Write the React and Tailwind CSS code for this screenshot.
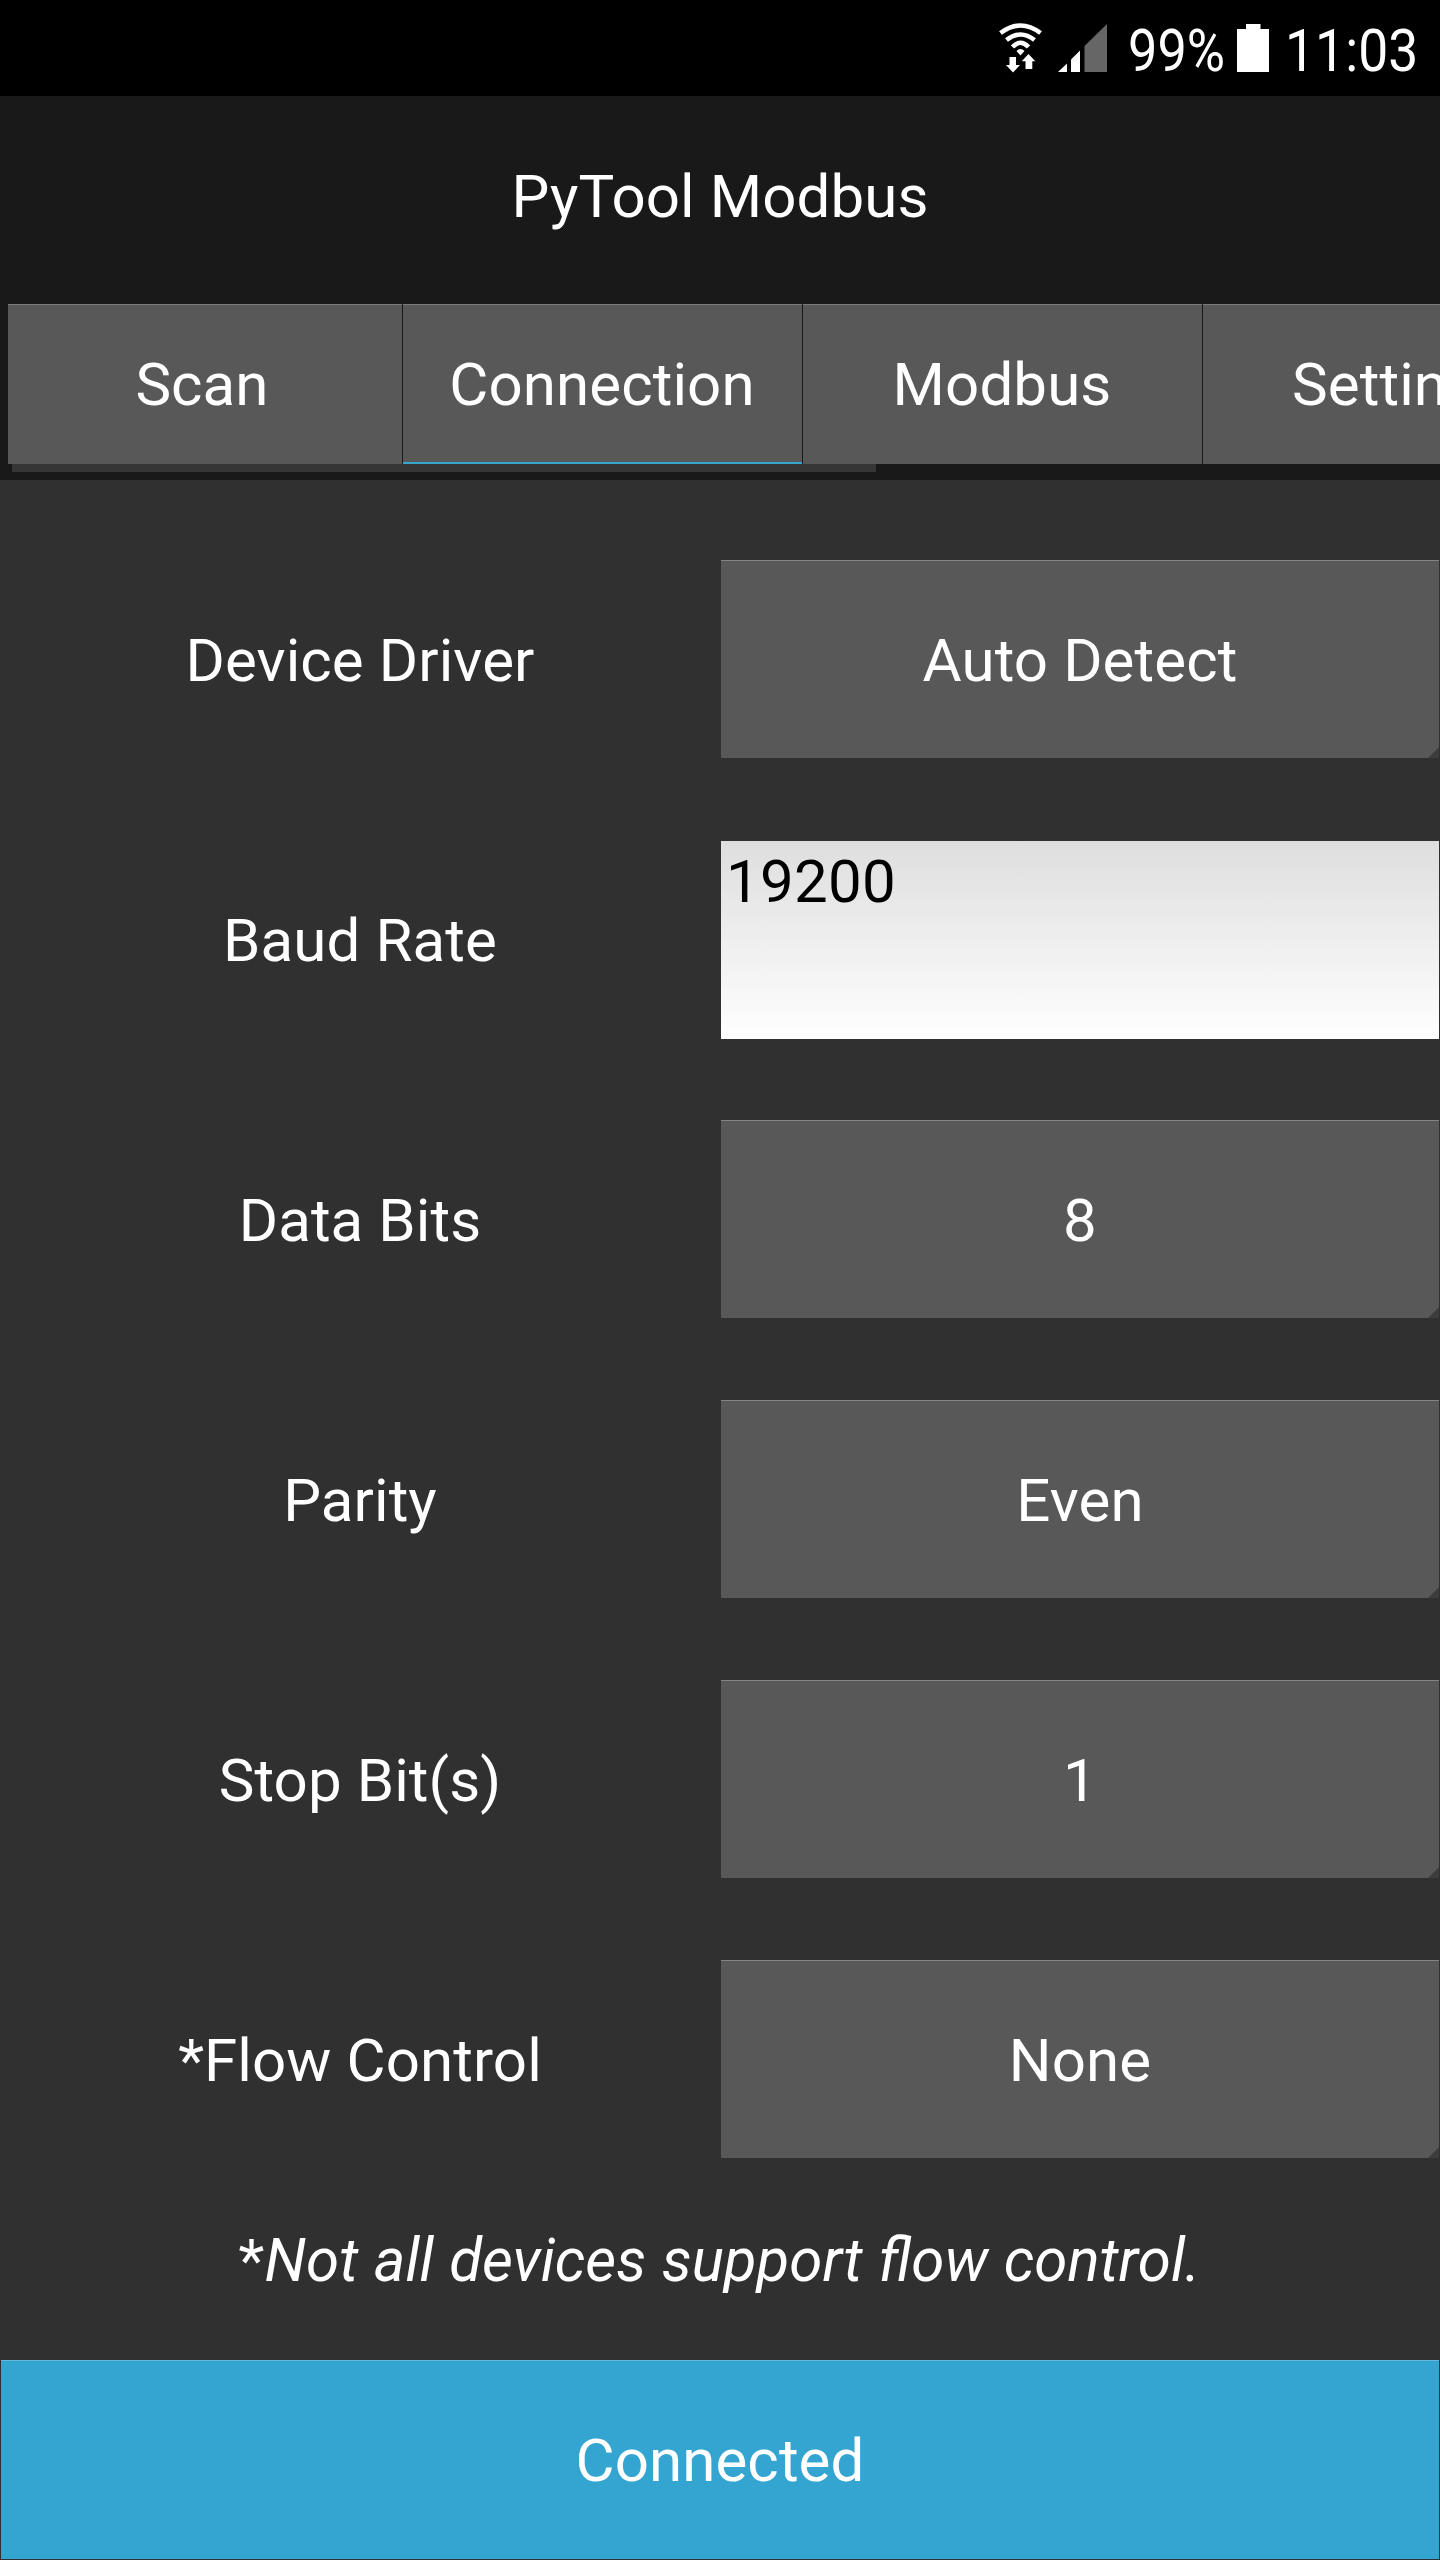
import React from 'react';

const tabs = [
  { label: 'Scan', active: false },
  { label: 'Connection', active: true },
  { label: 'Modbus', active: false },
  { label: 'Settings', active: false },
];

const settings = [
  { label: 'Device Driver', value: 'Auto Detect', type: 'spinner' },
  { label: 'Baud Rate', value: '19200', type: 'input' },
  { label: 'Data Bits', value: '8', type: 'spinner' },
  { label: 'Parity', value: 'Even', type: 'spinner' },
  { label: 'Stop Bit(s)', value: '1', type: 'spinner' },
  { label: '*Flow Control', value: 'None', type: 'spinner' },
];

function WifiIcon() {
  return (
    <svg className="h-[50px] w-[44px]" viewBox="0 0 44 50" fill="none" stroke="#fff" strokeWidth="4.6">
      <path d="M1.5 10 Q21.5 -5 41.5 10" />
      <path d="M7.500 17 Q21.500 6 35.500 17" />
      <path d="M13.500 24 Q21.500 15.500 29.500 24" />
      <path d="M17.500 28 Q21.500 24 25.500 28 L21.500 32.500 Z" fill="#fff" stroke="none" />
      <path d="M10.500 34 H17 V42 H21 L14 49.500 L7 42 H10.500 Z" fill="#fff" stroke="none" />
      <path d="M26.500 46 H33.300 V38.300 H36.300 L29.500 31 L22.700 38.300 H26.500 Z" fill="#fff" stroke="none" />
    </svg>
  );
}

function SignalIcon() {
  return (
    <svg className="h-[48px] w-[50px]" viewBox="0 0 50 48">
      <path d="M0 48 L9 39.500 V48 Z" fill="#fff" />
      <path d="M13 48 V35.500 L22 26.500 V48 Z" fill="#fff" />
      <path d="M26.500 48 V22 L49 0 V48 Z" fill="#666" />
    </svg>
  );
}

function BatteryIcon() {
  return (
    <svg className="h-[48px] w-[32px]" viewBox="0 0 32 48">
      <path d="M0 5 H9 V0 H23.500 V5 H32 V48 H0 Z" fill="#fff" />
    </svg>
  );
}

function StatusBar() {
  return (
    <div className="flex h-24 items-start bg-black pl-[999px] pt-[23px]">
      <WifiIcon />
      <div className="ml-[15px] mt-px">
        <SignalIcon />
      </div>
      <div className="ml-5 mt-[3px] w-[109px] whitespace-nowrap leading-[50px]">
        <span className="inline-block origin-left scale-x-[0.87]">99%</span>
      </div>
      <div className="mt-px">
        <BatteryIcon />
      </div>
      <div className="ml-4 mt-[3px] w-[140px] whitespace-nowrap leading-[50px]">
        <span className="inline-block origin-left scale-x-[0.89]">11:03</span>
      </div>
    </div>
  );
}

function Tab({ label, active }) {
  return (
    <div
      className={`flex h-40 w-[399px] shrink-0 items-center justify-center border-t border-[#7b7b7b] bg-[#585858] pr-px first:w-[394px] first:pr-[6px] ${
        active ? 'shadow-[inset_0_-2px_0_#38a5cb]' : ''
      }`}
    >
      {label}
    </div>
  );
}

function Spinner({ value }) {
  return (
    <div className="relative mr-px flex h-[198px] w-[718px] items-center justify-center border-t border-[#858585] bg-[#585858] pt-[2px]">
      {value}
      <svg className="absolute bottom-0 right-0 h-[11px] w-[11px]" viewBox="0 0 11 11">
        <path d="M11 0 V11 H0 Z" fill="#3d3d3d" />
      </svg>
    </div>
  );
}

function TextInput({ value }) {
  return (
    <div className="-mb-px mr-px mt-px h-[198px] w-[718px] bg-linear-to-b from-[#dedede] to-white pl-[5px] pt-[6px] tracking-[0.3px] text-black">
      {value}
    </div>
  );
}

export default function App() {
  return (
    <div className="flex h-[2560px] w-[1440px] flex-col overflow-hidden bg-[#303030] font-['Roboto',sans-serif] text-[60px] leading-[70px] tracking-[0.1px] text-white">
      <StatusBar />

      {/* Title and tab strip */}
      <div className="h-[384px] bg-[#191919]">
        <div className="flex h-[208px] items-center justify-center pb-[6px]">PyTool Modbus</div>
        <div className="flex gap-px overflow-hidden pl-2">
          {tabs.map((tab) => (
            <Tab key={tab.label} {...tab} />
          ))}
        </div>
        <div className="ml-3 h-2 w-[864px] bg-[#363636]" />
      </div>

      {/* Connection settings */}
      <div className="flex flex-col gap-[82px] pt-20">
        {settings.map((item) => (
          <div key={item.label} className="flex h-[198px] items-center">
            <div className="w-[721px] pr-px pt-1 text-center">{item.label}</div>
            {item.type === 'input' ? <TextInput value={item.value} /> : <Spinner value={item.value} />}
          </div>
        ))}
      </div>

      <div className="flex flex-1 items-center justify-center pr-px pt-1 tracking-normal [word-spacing:0.8px]">
        <span>
          *<span className="italic">Not all devices support flow control.</span>
        </span>
      </div>

      <div className="mx-px mb-px flex h-[199px] shrink-0 items-center justify-center border-t border-[#66b8da] bg-[#34a4d1] pt-[2px]">
        Connected
      </div>
    </div>
  );
}
